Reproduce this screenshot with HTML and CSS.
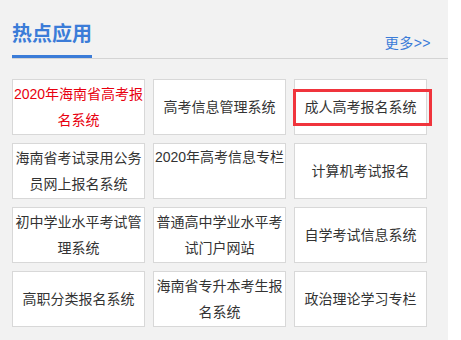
FILE: index.html
```html
<!DOCTYPE html>
<html lang="zh-CN">
<head>
    <meta charset="UTF-8">
    <title>热点应用</title>
    <link rel="stylesheet" href="styles.css">
</head>
<body>
    <div class="panel">
        <div class="panel-head">
            <h2 class="panel-title">热点应用</h2>
            <a class="more" href="#">更多&gt;&gt;</a>
        </div>
        <div class="apps">
            <a class="app hot" href="#"><span>2020年海南省高考报名系统</span></a>
            <a class="app" href="#"><span>高考信息管理系统</span></a>
            <a class="app marked" href="#"><span>成人高考报名系统</span></a>

            <a class="app" href="#"><span>海南省考试录用公务员网上报名系统</span></a>
            <a class="app top" href="#"><span>2020年高考信息专栏</span></a>
            <a class="app" href="#"><span>计算机考试报名</span></a>

            <a class="app" href="#"><span>初中学业水平考试管理系统</span></a>
            <a class="app" href="#"><span>普通高中学业水平考试门户网站</span></a>
            <a class="app" href="#"><span>自学考试信息系统</span></a>

            <a class="app" href="#"><span>高职分类报名系统</span></a>
            <a class="app" href="#"><span>海南省专升本考生报名系统</span></a>
            <a class="app" href="#"><span>政治理论学习专栏</span></a>
        </div>
    </div>
</body>
</html>
```

FILE: styles.css
```css
html, body {
    margin: 0;
    background-color: #fff;
    font-family: "Liberation Sans", "Noto Sans CJK SC", sans-serif;
}

.panel {
    width: 448px;
    height: 340px;
    background-color: #f2f2f2;
    padding-top: 19px;
    box-sizing: border-box;
}

.panel-head {
    margin-left: 12px;
    display: flex;
    justify-content: space-between;
    align-items: flex-end;
    border-bottom: 1px solid #d4d4d4;
}

.panel-title {
    margin: 0;
    font-size: 20px;
    line-height: 30px;
    font-weight: bold;
    color: #3b7cd8;
    border-bottom: 3px solid #3b7cd8;
    padding-bottom: 6px;
}

.more {
    margin-right: 17px;
    margin-bottom: 7px;
    font-size: 14px;
    line-height: 16px;
    letter-spacing: 0.5px;
    color: #3b7cd8;
    text-decoration: none;
}

.apps {
    margin: 20px 0 0 12px;
    display: grid;
    grid-template-columns: repeat(3, 133px);
    grid-auto-rows: 56px;
    gap: 8px;
}

.app {
    position: relative;
    display: flex;
    align-items: center;
    justify-content: center;
    box-sizing: border-box;
    background-color: #fff;
    border: 1px solid #d8d8d8;
    font-size: 14px;
    line-height: 26px;
    color: #333;
    text-align: center;
    text-decoration: none;
}

.app.hot {
    color: #e8000f;
}

.app.top {
    align-items: flex-start;
}

.app.marked::after {
    content: "";
    position: absolute;
    left: -2px;
    top: 9px;
    width: 139px;
    height: 37px;
    box-sizing: border-box;
    border: 3px solid #f0343c;
}
```
